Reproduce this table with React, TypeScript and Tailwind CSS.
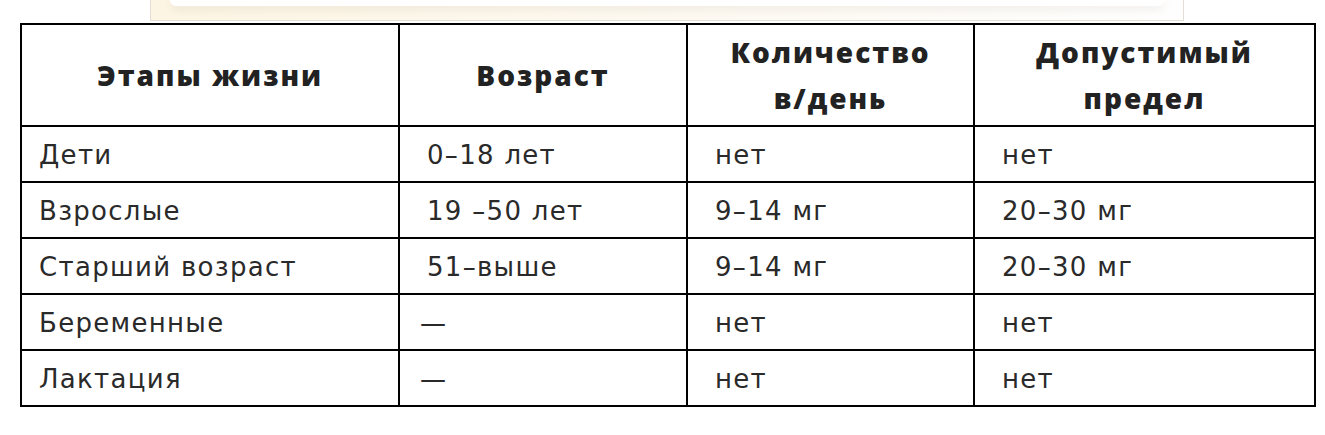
const head = [["Этапы жизни"], ["Возраст"], ["Количество", "в/день"], ["Допустимый", "предел"]];

const rows = [
  ["Дети", "0–18 лет", "нет", "нет"],
  ["Взрослые", "19 –50 лет", "9–14 мг", "20–30 мг"],
  ["Старший возраст", "51–выше", "9–14 мг", "20–30 мг"],
  ["Беременные", "—", "нет", "нет"],
  ["Лактация", "—", "нет", "нет"],
];

const pad = ["pl-[17px]", "pl-[27px]", "pl-[27px]", "pl-[27px]"];

export default function App() {
  return (
    <div className="w-[1325px] h-[435px] bg-white overflow-hidden">
      {/* cut-off card above the table */}
      <div className="ml-[150px] w-[1034px] h-[21px] border-x border-b border-[#e4dfd6] bg-gradient-to-r from-[#fcf5e3] via-[#fdf9f1] to-[#fefefe]">
        <div className="mx-[19px] h-[6px] rounded-b-[18px] bg-white shadow-[0_3px_8px_rgba(120,100,70,0.12)]" />
      </div>

      <table className="mt-[2px] ml-[20px] w-[1294px] table-fixed border-collapse border-2 border-black font-['DejaVu_Sans',Verdana,sans-serif] text-[#2a2a2a]">
        <colgroup>
          <col className="w-[378px]" />
          <col className="w-[288px]" />
          <col className="w-[287px]" />
          <col className="w-[341px]" />
        </colgroup>
        <thead>
          <tr>
            {head.map((h) => (
              <th
                key={h[0]}
                className="h-[102px] border-2 border-black px-[10px] text-center align-middle font-['Open_Sans',sans-serif] text-[28px] font-extrabold tracking-[2px] leading-[46px] text-[#222]"
              >
                {h.map((line, j) => (
                  <div key={j}>{line}</div>
                ))}
              </th>
            ))}
          </tr>
        </thead>
        <tbody>
          {rows.map((r) => (
            <tr key={r[0]}>
              {r.map((c, i) => (
                <td
                  key={i}
                  className={`h-[56px] border-2 border-black ${c === "—" ? "pl-[20px]" : pad[i]} align-middle text-[26px] tracking-[1.3px] leading-[30px] pt-[2px] whitespace-nowrap`}
                >
                  {c}
                </td>
              ))}
            </tr>
          ))}
        </tbody>
      </table>
    </div>
  );
}
